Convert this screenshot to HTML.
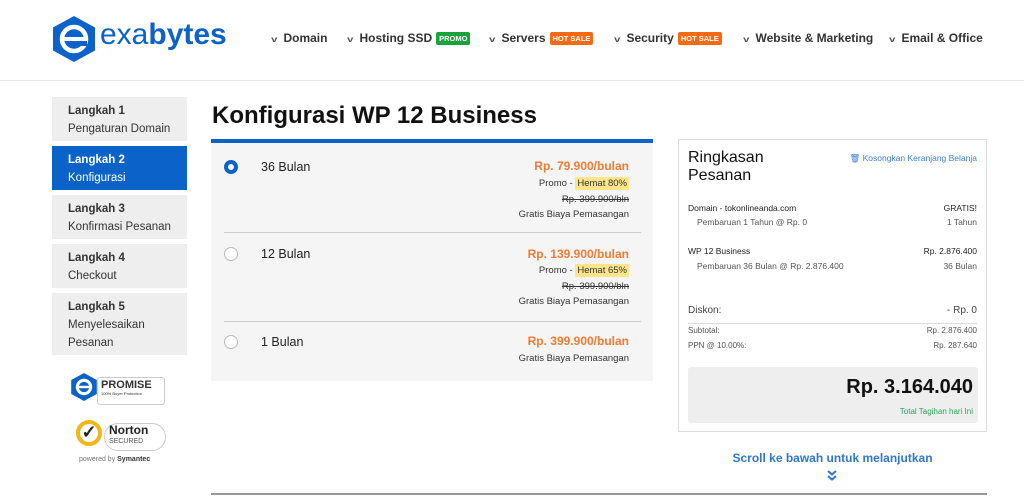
<!DOCTYPE html>
<html><head><meta charset="utf-8"><style>
*{margin:0;padding:0;box-sizing:border-box}
body{width:1024px;height:497px;overflow:hidden;background:#fff;font-family:"Liberation Sans",sans-serif;color:#222;position:relative}
.a{position:absolute;white-space:nowrap}
.nav{font-size:12px;font-weight:bold;color:#333;top:31px}
.nav .c{font-size:8px;color:#555;margin-right:7px;display:inline-block;transform:scaleX(1.4)}
.tag{font-size:7.5px;color:#fff;padding:2px 3px;border-radius:2px;margin-left:4px;vertical-align:1px}
.step{position:absolute;left:52px;width:135px;background:#eee;font-size:11.5px;color:#333;padding:5px 16px;line-height:18px;white-space:nowrap}
.step b{font-weight:bold}
.r{text-align:right;right:0}
.opt{position:absolute}
.price{color:#f47a32;font-size:12px;font-weight:bold}
.sm{font-size:9.5px;color:#333}
.rad{position:absolute;left:14px;width:14px;height:14px;border-radius:50%;border:1px solid #bbb;background:#fff}
</style></head><body>
<div class="a" style="left:0;top:80px;width:1024px;height:1px;background:#e5e5e5"></div>
<svg class="a" style="left:51px;top:15px" width="46" height="48" viewBox="0 0 46 48"><polygon points="23,1 44,12.5 44,35.5 23,47 2,35.5 2,12.5" fill="#0d62c9"/><circle cx="23" cy="24" r="12" fill="none" stroke="#fff" stroke-width="4.5"/><rect x="11" y="22" width="24" height="4" fill="#fff"/><rect x="27" y="26" width="9" height="5" fill="#0d62c9"/></svg>
<div class="a" style="left:100px;top:18px;font-size:30px;color:#0d62c9">exa<b>bytes</b></div>
<div class="a nav" style="left:272px"><span class="c">v</span>Domain</div>
<div class="a nav" style="left:348px"><span class="c">v</span>Hosting SSD<span class="tag" style="background:#1aa33a">PROMO</span></div>
<div class="a nav" style="left:490px"><span class="c">v</span>Servers<span class="tag" style="background:#f56a12">HOT SALE</span></div>
<div class="a nav" style="left:615px"><span class="c">v</span>Security<span class="tag" style="background:#f56a12">HOT SALE</span></div>
<div class="a nav" style="left:744px"><span class="c">v</span>Website &amp; Marketing</div>
<div class="a nav" style="left:890px"><span class="c">v</span>Email &amp; Office</div>

<div class="step" style="top:97px;height:44px"><b>Langkah 1</b><br>Pengaturan Domain</div>
<div class="step" style="top:146px;height:44px;background:#0b63c9;color:#fff"><b>Langkah 2</b><br>Konfigurasi</div>
<div class="step" style="top:195px;height:44px"><b>Langkah 3</b><br>Konfirmasi Pesanan</div>
<div class="step" style="top:244px;height:44px"><b>Langkah 4</b><br>Checkout</div>
<div class="step" style="top:293px;height:62px"><b>Langkah 5</b><br>Menyelesaikan<br>Pesanan</div>

<svg class="a" style="left:70px;top:372px" width="28" height="30" viewBox="0 0 46 48"><polygon points="23,1 44,12.5 44,35.5 23,47 2,35.5 2,12.5" fill="#0d62c9"/><circle cx="23" cy="24" r="11" fill="none" stroke="#fff" stroke-width="5"/><rect x="11" y="22" width="24" height="4" fill="#fff"/></svg>
<div class="a" style="left:97px;top:377px;width:68px;height:28px;border:1px solid #ccc;border-radius:3px;font-size:11px;font-weight:bold;padding:1px 3px;color:#333">PROMISE<div style="font-size:4px;font-weight:normal">100% Buyer Protection</div></div>
<div class="a" style="left:76px;top:420px;width:26px;height:26px;border-radius:50%;border:4px solid #f3b619;font-size:18px;line-height:17px;text-align:center;font-weight:bold">✓</div>
<div class="a" style="left:104px;top:423px;width:62px;height:28px;border:1px solid #ccc;border-radius:14px;font-size:12px;font-weight:bold;padding:0 4px;line-height:12px">Norton<div style="font-size:7px;font-weight:normal;color:#555">SECURED</div></div>
<div class="a" style="left:79px;top:456px;font-size:7px;color:#777">powered by <b style="color:#333">Symantec</b></div>

<div class="a" style="left:212px;top:102px;font-size:24px;font-weight:bold;color:#111">Konfigurasi WP 12 Business</div>
<div class="a" style="left:211px;top:139px;width:442px;height:4px;background:#0b63c9"></div>
<div class="a" style="left:211px;top:143px;width:442px;height:238px;background:#f5f5f5"></div>

<div class="opt" style="top:143px;height:90px;border-bottom:1px solid #ccc;left:224px;width:417px">
 <div class="rad" style="left:0;top:17px;border:4px solid #0b63c9"></div>
 <div class="a" style="left:37px;top:17px;font-size:12.5px">36 Bulan</div>
 <div class="a r price" style="top:16px;right:12px">Rp. 79.900/bulan</div>
 <div class="a r sm" style="top:35px;right:12px">Promo - <span style="background:#fde68a;padding:1px 2px">Hemat 80%</span></div>
 <div class="a r sm" style="top:51px;right:12px;text-decoration:line-through">Rp. 399.900/bln</div>
 <div class="a r sm" style="top:66px;right:12px">Gratis Biaya Pemasangan</div>
</div>
<div class="opt" style="top:234px;height:88px;border-bottom:1px solid #ccc;left:224px;width:417px">
 <div class="rad" style="left:0;top:13px"></div>
 <div class="a" style="left:37px;top:13px;font-size:12.5px">12 Bulan</div>
 <div class="a r price" style="top:13px;right:12px">Rp. 139.900/bulan</div>
 <div class="a r sm" style="top:31px;right:12px">Promo - <span style="background:#fde68a;padding:1px 2px">Hemat 65%</span></div>
 <div class="a r sm" style="top:47px;right:12px;text-decoration:line-through">Rp. 399.900/bln</div>
 <div class="a r sm" style="top:62px;right:12px">Gratis Biaya Pemasangan</div>
</div>
<div class="opt" style="top:322px;height:59px;left:224px;width:417px">
 <div class="rad" style="left:0;top:13px"></div>
 <div class="a" style="left:37px;top:13px;font-size:12.5px">1 Bulan</div>
 <div class="a r price" style="top:12px;right:12px">Rp. 399.900/bulan</div>
 <div class="a r sm" style="top:31px;right:12px">Gratis Biaya Pemasangan</div>
</div>

<div class="a" style="left:678px;top:139px;width:309px;height:293px;border:1px solid #ddd">
 <div class="a" style="left:9px;top:9px;font-size:16px;line-height:18px;white-space:normal;width:100px;color:#111">Ringkasan Pesanan</div>
 <div class="a" style="right:9px;top:13px;font-size:8.5px;color:#3b7dd8">🗑 Kosongkan Keranjang Belanja</div>
 <div class="a" style="left:9px;top:63px;font-size:8.5px">Domain - tokonlineanda.com</div>
 <div class="a" style="right:9px;top:63px;font-size:8.5px">GRATIS!</div>
 <div class="a" style="left:18px;top:77px;font-size:8.5px;color:#555">Pembaruan 1 Tahun @ Rp. 0</div>
 <div class="a" style="right:9px;top:77px;font-size:8.5px;color:#555">1 Tahun</div>
 <div class="a" style="left:9px;top:106px;font-size:8.5px">WP 12 Business</div>
 <div class="a" style="right:9px;top:106px;font-size:8.5px">Rp. 2.876.400</div>
 <div class="a" style="left:18px;top:121px;font-size:8.5px;color:#555">Pembaruan 36 Bulan @ Rp. 2.876.400</div>
 <div class="a" style="right:9px;top:121px;font-size:8.5px;color:#555">36 Bulan</div>
 <div class="a" style="left:9px;top:165px;font-size:10px;color:#444">Diskon:</div>
 <div class="a" style="right:9px;top:165px;font-size:10px;color:#444">- Rp. 0</div>
 <div class="a" style="left:9px;top:183px;width:289px;height:1px;background:#ddd"></div>
 <div class="a" style="left:9px;top:186px;font-size:8px;color:#555">Subtotal:</div>
 <div class="a" style="right:9px;top:186px;font-size:8px;color:#555">Rp. 2.876.400</div>
 <div class="a" style="left:9px;top:201px;font-size:8px;color:#555">PPN @ 10.00%:</div>
 <div class="a" style="right:9px;top:201px;font-size:8px;color:#555">Rp. 287.640</div>
 <div class="a" style="left:9px;top:227px;width:290px;height:56px;background:#eee;border-radius:3px">
  <div class="a" style="right:5px;top:9px;font-size:20px;color:#111;font-weight:bold">Rp. 3.164.040</div>
  <div class="a" style="right:5px;top:40px;font-size:8px;color:#2aa55a">Total Tagihan hari Ini</div>
 </div>
</div>
<div class="a" style="left:678px;width:309px;top:451px;text-align:center;font-size:12px;font-weight:bold;color:#2f76d3">Scroll ke bawah untuk melanjutkan</div>
<svg class="a" style="left:827px;top:470px" width="10" height="11" viewBox="0 0 10 11"><path d="M1 1L5 4.5L9 1M1 6L5 9.5L9 6" fill="none" stroke="#2f76d3" stroke-width="2"/></svg>
<div class="a" style="left:211px;top:493px;width:776px;height:2px;background:#999"></div>
</body></html>
